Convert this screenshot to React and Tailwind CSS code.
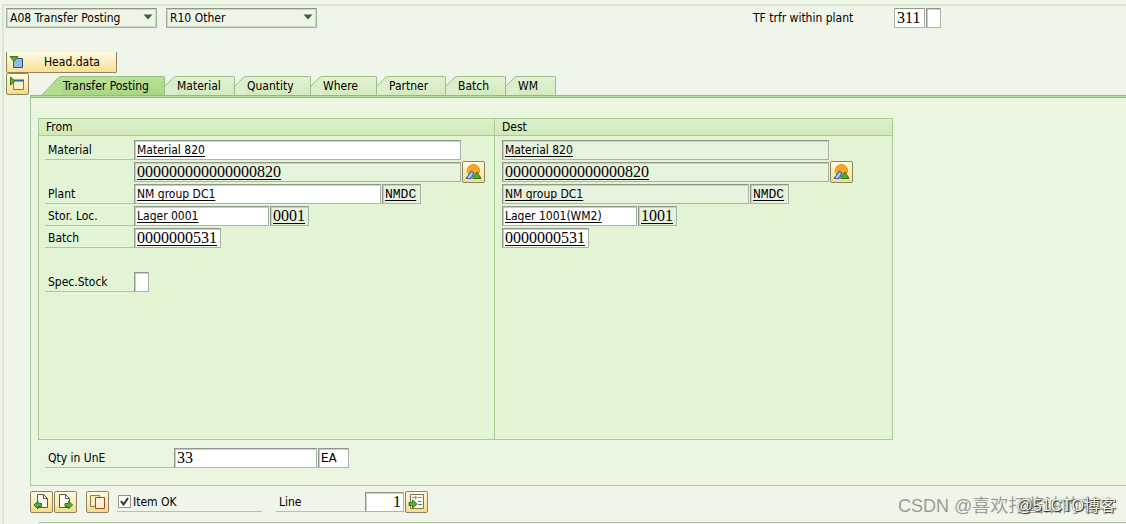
import { useState } from 'react'
import clsx from 'clsx'

const TABS = [
  { label: 'Transfer Posting', width: 'w-[103px]' },
  { label: 'Material', width: 'w-[58px]' },
  { label: 'Quantity', width: 'w-[64px]' },
  { label: 'Where', width: 'w-[54px]' },
  { label: 'Partner', width: 'w-[57px]' },
  { label: 'Batch', width: 'w-[48px]' },
  { label: 'WM', width: 'w-[38px]' },
]

function Select({ label, options }) {
  return (
    <div className="relative w-[151px]">
      <select
        aria-label={label}
        className="block w-full h-5 pl-[3px] pr-5 appearance-none border border-[#a3b09d] border-t-[#8b9886] bg-[#eef5e6] shadow-[inset_0_0_0_1px_#cbd6c4]"
      >
        {options.map((option) => (
          <option key={option}>{option}</option>
        ))}
      </select>
      <svg
        className="absolute right-1 top-1.5 pointer-events-none"
        width="10"
        height="6"
        viewBox="0 0 10 6"
      >
        <path d="M0.5 0.5h9L5 5.5z" fill="#2f6b26" />
      </svg>
    </div>
  )
}

function Field({ label, value = '', mono, code, underline, readOnly, className }) {
  return (
    <input
      aria-label={label}
      defaultValue={value}
      readOnly={readOnly}
      className={clsx(
        'h-5 px-0.5 border border-[#a9b4a4] border-t-[#8e9a89] border-l-[#8e9a89] shadow-[inset_1px_1px_0_#c6cfc1] outline-none',
        readOnly ? 'bg-[#e8f3de]' : 'bg-white',
        mono && "font-['Liberation_Serif',serif] text-[16px]",
        code && "font-['Liberation_Mono',monospace] text-[13px]",
        underline && 'underline underline-offset-2',
        className
      )}
    />
  )
}

function RowLabel({ children, className }) {
  return (
    <span className={clsx('h-5 pl-[3px] leading-5 border-b border-[#b3c4a6]', className)}>
      {children}
    </span>
  )
}

function IconButton({ label, children }) {
  return (
    <button
      aria-label={label}
      className="flex items-center justify-center shrink-0 w-[23px] h-[22px] border border-[#8d8360] rounded-xs bg-linear-to-b from-[#fffbe4] to-[#f6dc85]"
    >
      {children}
    </button>
  )
}

function MountainIcon() {
  return (
    <svg width="17" height="16" viewBox="0 0 17 16">
      <circle cx="8.5" cy="6.5" r="6" fill="#f7a823" stroke="#dc8a1c" />
      <path d="M1 14.5L6.5 7l2.500 2-3 5.500z" fill="#7db2ea" stroke="#2c5b9c" />
      <path d="M3.500 14.500L7 9" stroke="#d2e6fa" />
      <path d="M7.500 14.500L12 8l4 6.500z" fill="#4fae35" stroke="#2f7b22" />
    </svg>
  )
}

function PageIcon({ direction }) {
  const left = direction === 'left'
  return (
    <svg width="17" height="18" viewBox="0 0 17 18">
      <path
        d={left ? 'M4.500 1.500h6l4 4v9h-10z' : 'M2.500 1.500h6l4 4v9h-10z'}
        fill="#fffdf2"
        stroke="#5b594c"
      />
      <path
        d={left ? 'M10.500 1.500v4h4' : 'M8.500 1.500v4h4'}
        fill="none"
        stroke="#5b594c"
      />
      {left ? (
        <path d="M1 12l4-4v2.500h3.500v3H5V16z" fill="#55b334" stroke="#2f7420" />
      ) : (
        <path d="M15.500 12l-4-4v2.500H8v3h3.500V16z" fill="#55b334" stroke="#2f7420" />
      )}
    </svg>
  )
}

function CopyIcon() {
  return (
    <svg width="17" height="16" viewBox="0 0 17 16" fill="none">
      <path d="M1.500 1.500h9v11h-9z" stroke="#857a5a" fill="#fbedbd" />
      <path d="M6.500 3.500h9v11h-9z" stroke="#a8452c" fill="#fdf0d5" />
    </svg>
  )
}

function ListIcon() {
  return (
    <svg width="17" height="18" viewBox="0 0 17 18" fill="none">
      <path d="M2.500 1.500h13v14h-13z" fill="#fffdf2" stroke="#77745f" />
      <path d="M4 4.500h4M7 3l2 1.500L7 6M10 4.500h4" stroke="#8a8ba8" />
      <path d="M10 11.500h4M10 8.500h3" stroke="#3f7f5c" />
      <path d="M1 9.500h3.500V7L9 11l-4.500 4v-2.500H1z" fill="#55b334" stroke="#2f7420" />
    </svg>
  )
}

function HeadIcon() {
  return (
    <svg width="15" height="14" viewBox="0 0 15 14">
      <path d="M4.500 3.500h9v9h-9z" fill="#8fbbe8" stroke="#2f5582" />
      <path d="M1 1.500h8L5 6.500z" fill="#63a83c" stroke="#3d7626" />
    </svg>
  )
}

function DetailIcon() {
  return (
    <svg width="17" height="16" viewBox="0 0 17 16">
      <path d="M4.500 4.500h10v9h-10z" fill="#fcf0c4" stroke="#857a5a" />
      <path d="M5 4.500h10" stroke="#2369ac" strokeWidth="2" />
      <path d="M1.500 1v8L6 5z" fill="#63a83c" stroke="#3d7626" />
    </svg>
  )
}

function Tab({ label, width, active, onClick }) {
  return (
    <button role="tab" aria-selected={active} onClick={onClick} className="flex h-[19px]">
      {active ? (
        <svg className="block shrink-0" width="20" height="19" viewBox="0 0 20 19">
          <path d="M0 19L16 2Q17.500 0.500 20 0.500V19z" fill="#b4dd92" />
          <path d="M0 19L16 2Q17.500 0.500 20 0.500" fill="none" stroke="#9dbd87" />
        </svg>
      ) : (
        <svg className="block shrink-0" width="12" height="19" viewBox="0 0 12 19">
          <path d="M0 10L8 2Q9.500 0.500 12 0.500V19H0z" fill="#dcefcd" />
          <path d="M0 10L8 2Q9.500 0.500 12 0.500" fill="none" stroke="#9dbd87" />
        </svg>
      )}
      <span
        className={clsx(
          'block h-[19px] leading-[19px] text-left border-t border-r border-[#9dbd87] rounded-tr-xs',
          width,
          active
            ? 'pl-px bg-linear-to-b from-[#b9e098] to-[#a9d685]'
            : 'bg-linear-to-b from-[#e3f2d7] to-[#d2eabc]'
        )}
      >
        {label}
      </span>
    </button>
  )
}

function GroupHeader({ children }) {
  return (
    <h2 className="h-[18px] pl-[7px] leading-4 border-y border-[#a9cc93] bg-linear-to-b from-[#ddf0cd] to-[#cfeab6]">
      {children}
    </h2>
  )
}

function FromGroup() {
  return (
    <section className="w-[456px]">
      <GroupHeader>From</GroupHeader>
      <div className="flex flex-col gap-0.5 pt-1 pl-1.5">
        <div className="flex h-5">
          <RowLabel className="w-[89px]">Material</RowLabel>
          <Field label="Material" value="Material 820" underline className="w-[327px]" />
        </div>
        <div className="flex items-center h-5 pl-[89px] gap-px">
          <Field label="Material number" value="000000000000000820" mono underline readOnly className="w-[327px]" />
          <IconButton label="Material picture">
            <MountainIcon />
          </IconButton>
        </div>
        <div className="flex h-5">
          <RowLabel className="w-[89px]">Plant</RowLabel>
          <Field label="Plant" value="NM group DC1" underline className="w-[247px] mr-px" />
          <Field label="Plant code" value="NMDC" code underline readOnly className="w-[39px]" />
        </div>
        <div className="flex h-5">
          <RowLabel className="w-[89px]">Stor. Loc.</RowLabel>
          <Field label="Storage location" value="Lager 0001" underline className="w-[135px] mr-px" />
          <Field label="Storage location code" value="0001" mono underline readOnly className="w-[39px]" />
        </div>
        <div className="flex h-5">
          <RowLabel className="w-[89px]">Batch</RowLabel>
          <Field label="Batch" value="0000000531" mono underline className="w-[87px]" />
        </div>
        <div className="flex h-5 mt-[22px]">
          <RowLabel className="w-[89px]">Spec.Stock</RowLabel>
          <Field label="Special stock" className="w-[15px]" />
        </div>
      </div>
    </section>
  )
}

function DestGroup() {
  return (
    <section className="w-[399px] border-l border-[#a9cc93]">
      <GroupHeader>Dest</GroupHeader>
      <div className="flex flex-col gap-0.5 pt-1 pl-[7px]">
        <Field label="Destination material" value="Material 820" underline readOnly className="w-[327px]" />
        <div className="flex items-center h-5 gap-px">
          <Field label="Destination material number" value="000000000000000820" mono underline readOnly className="w-[327px]" />
          <IconButton label="Destination material picture">
            <MountainIcon />
          </IconButton>
        </div>
        <div className="flex h-5 gap-px">
          <Field label="Destination plant" value="NM group DC1" underline readOnly className="w-[247px]" />
          <Field label="Destination plant code" value="NMDC" code underline readOnly className="w-[39px]" />
        </div>
        <div className="flex h-5 gap-px">
          <Field label="Destination storage location" value="Lager 1001(WM2)" underline className="w-[135px]" />
          <Field label="Destination storage location code" value="1001" mono underline readOnly className="w-[39px]" />
        </div>
        <Field label="Destination batch" value="0000000531" mono underline className="w-[87px]" />
      </div>
    </section>
  )
}

function Watermark() {
  return (
    <div className="absolute right-2.5 bottom-1 w-[218px] h-7 pointer-events-none font-['Liberation_Sans','Noto_Sans_CJK_SC',sans-serif] whitespace-nowrap">
      <span className="absolute left-0 top-0 text-[18px] leading-7 text-[#9a9f96]">
        CSDN @喜欢打酱油的老
      </span>
      <span className="absolute right-0 top-0 text-[16px] leading-7 text-[#f5f8f2] [text-shadow:1px_1px_1px_#222,0_0_1px_#333]">
        @51CTO博客
      </span>
    </div>
  )
}

export default function App() {
  const [activeTab, setActiveTab] = useState('Transfer Posting')
  const [itemOk, setItemOk] = useState(true)

  return (
    <main className="relative overflow-hidden bg-[#eff5e9] font-['DejaVu_Sans_Condensed','Noto_Sans',sans-serif] text-[12px] text-black">
      <div className="h-1 bg-[#eef6e6]" />
      <div className="ml-0.5 pb-px border-t-2 border-l-2 border-[#dbe6d3]">
        <div className="flex items-start pt-0.5 pl-0.5">
          <Select label="Transaction" options={['A08 Transfer Posting']} />
          <div className="w-[9px]" />
          <Select label="Reference document" options={['R10 Other']} />
          <label htmlFor="movement" className="w-[141px] ml-[436px] leading-5">
            TF trfr within plant
          </label>
          <input
            id="movement"
            defaultValue="311"
            className="w-[31px] h-5 px-0.5 mr-px border border-[#a9b4a4] border-t-[#8e9a89] bg-white font-['Liberation_Serif',serif] text-[16px]"
          />
          <Field label="Special stock indicator" className="w-[15px]" />
        </div>

        <div className="pt-6 pl-0.5">
          <button className="flex items-center w-[111px] h-[21px] pl-0.5 border border-t-0 border-[#8d8360] rounded-b-xs bg-linear-to-b from-[#fffbe4] to-[#f8e08f]">
            <HeadIcon />
            <span className="flex-1 pl-1">Head.data</span>
          </button>
        </div>

        <div className="flex pl-0.5">
          <IconButton label="Close detail">
            <DetailIcon />
          </IconButton>
          <div className="flex-1 min-w-0 ml-px">
            <div role="tablist" className="flex pt-[3px] pl-3">
              {TABS.map((tab) => (
                <Tab
                  key={tab.label}
                  label={tab.label}
                  width={tab.width}
                  active={tab.label === activeTab}
                  onClick={() => setActiveTab(tab.label)}
                />
              ))}
            </div>
            <div className="h-[3px] border-y border-[#8fbd72] bg-[#b5dc97]" />
            <div className="pt-5 pl-[7px] pb-[17px] border-l border-b border-[#a9cc93] bg-[#e9f5de]">
              <div className="flex w-[855px] h-[322px] border-x border-b border-[#a9cc93] bg-[#e3f4d5]">
                <FromGroup />
                <DestGroup />
              </div>
              <div className="flex h-5 mt-2 pl-[7px]">
                <RowLabel className="w-[129px]">Qty in UnE</RowLabel>
                <Field label="Quantity" value="33" mono className="w-[143px] mr-px" />
                <Field label="Unit" value="EA" code className="w-[31px]" />
              </div>
            </div>
          </div>
        </div>

        <div className="flex items-center h-[22px] mt-[5px] pl-[26px]">
          <IconButton label="Previous item">
            <PageIcon direction="left" />
          </IconButton>
          <div className="w-px" />
          <IconButton label="Next item">
            <PageIcon direction="right" />
          </IconButton>
          <div className="w-[9px]" />
          <IconButton label="Copy item">
            <CopyIcon />
          </IconButton>
          <label className="flex items-center w-[145px] h-5 ml-2 gap-0.5 pl-px border-b border-[#b3c4a6]">
            <input
              type="checkbox"
              checked={itemOk}
              onChange={(e) => setItemOk(e.target.checked)}
              className="peer appearance-none w-[13px] h-[13px] border border-[#8e9a89] bg-white"
            />
            <svg
              className="absolute hidden peer-checked:block pointer-events-none"
              width="13"
              height="13"
              viewBox="0 0 13 13"
            >
              <path d="M3 6l2.500 3.500L10 3" fill="none" stroke="#333" strokeWidth="2" />
            </svg>
            Item OK
          </label>
          <RowLabel className="w-[89px] ml-[14px]">Line</RowLabel>
          <Field label="Line" value="1" mono className="w-[39px] mr-px text-right" />
          <IconButton label="Go to line">
            <ListIcon />
          </IconButton>
        </div>
        <div className="mt-[9px] ml-[35px] border-t border-[#a9bf9a]" />
      </div>
      <Watermark />
    </main>
  )
}
